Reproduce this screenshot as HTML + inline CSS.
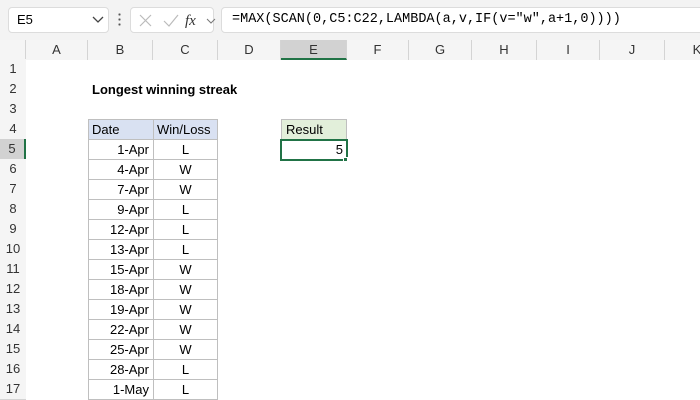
<!DOCTYPE html><html><head><style>
body{margin:0;width:700px;height:400px;overflow:hidden;background:#fff;font-family:"Liberation Sans",sans-serif;position:relative}
.a{position:absolute;box-sizing:border-box}
.t{font-size:13px;line-height:20px;color:#000}
.hdr{background:#f5f5f5;color:#333;font-size:13px;text-align:center;line-height:20px}
</style></head><body>
<div class="a" style="left:0;top:0;width:700px;height:40px;background:#f3f3f3"></div>
<div class="a" style="left:8px;top:7px;width:101px;height:26px;background:#fff;border:1px solid #dcdcdc;border-radius:4px;font-size:13px;line-height:24px;padding-left:8px">E5</div>
<svg class="a" style="left:92px;top:16px" width="12" height="8"><path d="M1 1L6 6L11 1" stroke="#444" fill="none" stroke-width="1.3"/></svg>
<div class="a" style="left:118px;top:12px;width:3px;height:16px;background:radial-gradient(circle,#555 1px,transparent 1.2px) 0 0/3px 5px"></div>
<div class="a" style="left:130px;top:7px;width:84px;height:26px;background:#fff;border:1px solid #dcdcdc;border-radius:4px"></div>
<svg class="a" style="left:138px;top:13px" width="80" height="16"><path d="M2 2L13 13M13 2L2 13" stroke="#bbb" stroke-width="1.2"/><path d="M26 8L31 13L40 2" stroke="#bbb" fill="none" stroke-width="1.2"/><text x="47" y="12" font-family="Liberation Serif" font-style="italic" font-size="15" fill="#333">fx</text><path d="M69 6L73 10L77 6" stroke="#777" fill="none"/></svg>
<div class="a" style="left:221px;top:7px;width:490px;height:26px;background:#fff;border:1px solid #dcdcdc;border-radius:4px;font-family:'Liberation Mono',monospace;font-size:13.5px;line-height:24px;padding-left:10px">=MAX(SCAN(0,C5:C22,LAMBDA(a,v,IF(v="w",a+1,0))))</div>
<div class="a" style="left:0;top:40px;width:700px;height:20px;background:#f5f5f5;border-bottom:1px solid #d4d4d4"></div>
<div class="a" style="left:0;top:40px;width:26px;height:360px;background:#f5f5f5;border-right:1px solid #d4d4d4"></div>
<div id="g"></div>
<div class="a t" style="left:92px;top:80px;font-weight:bold">Longest winning streak</div>
<div id="tb"></div>
<div class="a t" style="left:281px;top:119px;width:66px;height:21px;background:#e2efda;border:1px solid #bfbfbf;padding-left:4px">Result</div>
<div class="a t" style="left:280px;top:139px;width:68px;height:22px;border:2px solid #217346;text-align:right;padding-right:3px;line-height:18px">5</div>
<div class="a" style="left:343px;top:157px;width:5px;height:5px;background:#217346;border:1px solid #fff"></div>
<script>
var cols=[["A",26,88],["B",88,153],["C",153,218],["D",218,281],["E",281,347],["F",347,409],["G",409,472],["H",472,537],["I",537,600],["J",600,665],["K",665,730]];
var h="";cols.forEach(function(c){var s=c[0]=="E"?"background:#d2d2d2;border-bottom:2px solid #217346;":"";h+='<div class="a hdr" style="left:'+c[1]+'px;top:40px;width:'+(c[2]-c[1])+'px;height:20px;border-right:1px solid #d4d4d4;'+s+'">'+c[0]+'</div>';});
for(var i=1;i<=17;i++){var y=59+20*(i-1);var s=i==5?"background:#d2d2d2;border-right:2px solid #217346;":"";h+='<div class="a hdr" style="left:0;top:'+y+'px;width:26px;height:21px;border-bottom:1px solid #d4d4d4;'+s+'">'+i+'</div>';}
document.getElementById("g").innerHTML=h;
var d=[["1-Apr","L"],["4-Apr","W"],["7-Apr","W"],["9-Apr","L"],["12-Apr","L"],["13-Apr","L"],["15-Apr","W"],["18-Apr","W"],["19-Apr","W"],["22-Apr","W"],["25-Apr","W"],["28-Apr","L"],["1-May","L"]];
var t='<div class="a t" style="left:88px;top:119px;width:66px;height:21px;background:#d9e1f2;border:1px solid #bfbfbf;padding-left:3px">Date</div><div class="a t" style="left:153px;top:119px;width:65px;height:21px;background:#d9e1f2;border:1px solid #bfbfbf;padding-left:3px">Win/Loss</div>';
d.forEach(function(r,k){var y=139+20*k;t+='<div class="a t" style="left:88px;top:'+y+'px;width:66px;height:21px;border:1px solid #bfbfbf;text-align:right;padding-right:4px">'+r[0]+'</div><div class="a t" style="left:153px;top:'+y+'px;width:65px;height:21px;border:1px solid #bfbfbf;text-align:center">'+r[1]+'</div>';});
document.getElementById("tb").innerHTML=t;
</script>
</body></html>
